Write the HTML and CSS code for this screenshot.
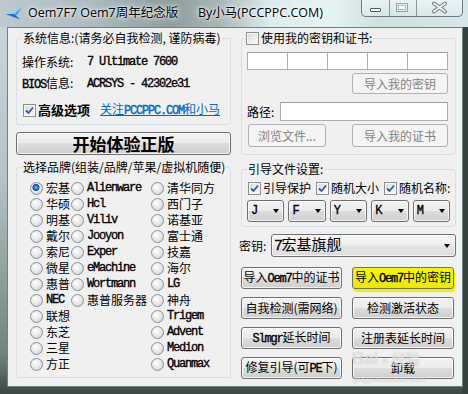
FILE: index.html
```html
<!DOCTYPE html>
<html lang="zh-CN">

<head>
  <meta charset="UTF-8">
  <title>Oem7F7 Oem7周年纪念版</title>
  <link rel="stylesheet" href="styles.css">
</head>

<body>

  <div class="ventana">

    <div class="titulo">
      <svg class="icono" width="17" height="13" viewBox="0 0 17 13">
        <path d="M0.5 7 L16.5 0.5 L9.5 7 Z" fill="#8fd0ff" />
        <path d="M0.5 7 L9.5 7 L15 12.5 L7 9.5 Z" fill="#1f6fd0" />
        <path d="M9.5 7 L16.5 0.5 L12 8 Z" fill="#3c94e8" />
      </svg>
      <span class="titulo-app">Oem7F7 Oem7周年纪念版</span>
      <span class="titulo-autor">By小马(PCCPPC.COM)</span>

      <div class="botones-ventana">
        <span class="bv bv-min">
          <svg width="28" height="16" viewBox="0 0 28 16">
            <rect x="8.5" y="8.5" width="10" height="3" rx="0.5" fill="#fff" stroke="#4d5962" />
          </svg>
        </span>
        <span class="bv bv-max">
          <svg width="26" height="16" viewBox="0 0 26 16">
            <rect x="6.5" y="3.5" width="11" height="8" fill="none" stroke="#9aa6ac" />
            <rect x="8.5" y="5.5" width="7" height="4" fill="#fff" stroke="#b4bec2" />
          </svg>
        </span>
        <span class="bv bv-cerrar">
          <svg width="46" height="16" viewBox="0 0 46 16">
            <path d="M17 3.5 L28 11.5 M28 3.5 L17 11.5" stroke="#6d7a82" stroke-width="4" stroke-linecap="round" />
            <path d="M17 3.5 L28 11.5 M28 3.5 L17 11.5" stroke="#f4f7f8" stroke-width="2" stroke-linecap="round" />
          </svg>
        </span>
      </div>
    </div>

    <div class="cliente">

      <div class="columna">
        <fieldset class="grupo grupo-sistema">
          <legend>系统信息:(请务必自我检测, 谨防病毒)</legend>
          <div class="fila-info"><span>操作系统:</span><span class="en">7 Ultimate 7600</span></div>
          <div class="fila-info"><span><span class="en">BIOS</span>信息:</span><span class="en">ACRSYS - 42302e31</span></div>
          <div class="fila-avanzado">
            <span class="check marcado">
              <svg width="11" height="11" viewBox="0 0 11 11">
                <path d="M2 5.5 L4.5 8 L9 2.5" fill="none" stroke="#3256a8" stroke-width="1.8" />
              </svg>
            </span>
            <b class="avanzado">高级选项</b>
            <a class="enlace" href="#">关注<span class="en">PCCPPC.COM</span>和小马</a>
          </div>
        </fieldset>

        <button class="btn btn-inicio">开始体验正版</button>

        <fieldset class="grupo grupo-marca">
          <legend>选择品牌(组装/品牌/苹果/虚拟机随便)</legend>
          <div class="marcas">
            <label class="opcion"><span class="radio activo"></span>宏基</label>
            <label class="opcion"><span class="radio"></span><span class="en">Alienware</span></label>
            <label class="opcion"><span class="radio"></span>清华同方</label>

            <label class="opcion"><span class="radio"></span>华硕</label>
            <label class="opcion"><span class="radio"></span><span class="en">Hcl</span></label>
            <label class="opcion"><span class="radio"></span>西门子</label>

            <label class="opcion"><span class="radio"></span>明基</label>
            <label class="opcion"><span class="radio"></span><span class="en">Viliv</span></label>
            <label class="opcion"><span class="radio"></span>诺基亚</label>

            <label class="opcion"><span class="radio"></span>戴尔</label>
            <label class="opcion"><span class="radio"></span><span class="en">Jooyon</span></label>
            <label class="opcion"><span class="radio"></span>富士通</label>

            <label class="opcion"><span class="radio"></span>索尼</label>
            <label class="opcion"><span class="radio"></span><span class="en">Exper</span></label>
            <label class="opcion"><span class="radio"></span>技嘉</label>

            <label class="opcion"><span class="radio"></span>微星</label>
            <label class="opcion"><span class="radio"></span><span class="en">eMachine</span></label>
            <label class="opcion"><span class="radio"></span>海尔</label>

            <label class="opcion"><span class="radio"></span>惠普</label>
            <label class="opcion"><span class="radio"></span><span class="en">Wortmann</span></label>
            <label class="opcion"><span class="radio"></span><span class="en">LG</span></label>

            <label class="opcion"><span class="radio"></span><span class="en">NEC</span></label>
            <label class="opcion"><span class="radio"></span>惠普服务器</label>
            <label class="opcion"><span class="radio"></span>神舟</label>

            <label class="opcion"><span class="radio"></span>联想</label>
            <span></span>
            <label class="opcion"><span class="radio"></span><span class="en">Trigem</span></label>

            <label class="opcion"><span class="radio"></span>东芝</label>
            <span></span>
            <label class="opcion"><span class="radio"></span><span class="en">Advent</span></label>

            <label class="opcion"><span class="radio"></span>三星</label>
            <span></span>
            <label class="opcion"><span class="radio"></span><span class="en">Medion</span></label>

            <label class="opcion"><span class="radio"></span>方正</label>
            <span></span>
            <label class="opcion"><span class="radio"></span><span class="en">Quanmax</span></label>
          </div>
        </fieldset>
      </div>

      <div class="columna">
        <fieldset class="grupo grupo-clave">
          <legend class="leyenda-check"><span class="check"></span>使用我的密钥和证书:</legend>
          <div class="claves">
            <span class="campo clave"></span>
            <span class="campo clave"></span>
            <span class="campo clave"></span>
            <span class="campo clave"></span>
            <span class="campo clave"></span>
          </div>
          <div class="fila-derecha">
            <button class="btn btn-gris" disabled>导入我的密钥</button>
          </div>
          <div class="fila-ruta">
            <span class="etiqueta-ruta">路径:</span>
            <span class="campo ruta"></span>
          </div>
          <div class="fila-archivos">
            <button class="btn btn-gris btn-examinar" disabled>浏览文件...</button>
            <button class="btn btn-gris" disabled>导入我的证书</button>
          </div>
        </fieldset>

        <fieldset class="grupo grupo-arranque">
          <legend>引导文件设置:</legend>
          <div class="fila-checks">
            <span class="item-check">
              <span class="check marcado">
                <svg width="11" height="11" viewBox="0 0 11 11">
                  <path d="M2 5.5 L4.5 8 L9 2.5" fill="none" stroke="#3256a8" stroke-width="1.8" />
                </svg>
              </span>引导保护
            </span>
            <span class="item-check">
              <span class="check marcado">
                <svg width="11" height="11" viewBox="0 0 11 11">
                  <path d="M2 5.5 L4.5 8 L9 2.5" fill="none" stroke="#3256a8" stroke-width="1.8" />
                </svg>
              </span>随机大小
            </span>
            <span class="item-check">
              <span class="check marcado">
                <svg width="11" height="11" viewBox="0 0 11 11">
                  <path d="M2 5.5 L4.5 8 L9 2.5" fill="none" stroke="#3256a8" stroke-width="1.8" />
                </svg>
              </span>随机名称:
            </span>
          </div>
          <div class="fila-letras">
            <span class="combo"><span class="en">J</span><span class="flecha"></span></span>
            <span class="combo"><span class="en">F</span><span class="flecha"></span></span>
            <span class="combo"><span class="en">Y</span><span class="flecha"></span></span>
            <span class="combo"><span class="en">K</span><span class="flecha"></span></span>
            <span class="combo"><span class="en">M</span><span class="flecha"></span></span>
          </div>
        </fieldset>

        <div class="fila-clave">
          <span class="etiqueta-clave">密钥:</span>
          <span class="combo combo-clave"><span><span class="en en-grande">7</span>宏基旗舰</span><span class="flecha"></span></span>
        </div>

        <div class="acciones">
          <button class="btn">导入<span class="en">Oem7</span>中的证书</button>
          <button class="btn btn-resaltado">导入<span class="en">Oem7</span>中的密钥</button>
          <button class="btn">自我检测(需网络)</button>
          <button class="btn">检测激活状态</button>
          <button class="btn"><span class="en">Slmgr</span>延长时间</button>
          <button class="btn">注册表延长时间</button>
          <button class="btn">修复引导(可<span class="en">PE</span>下)</button>
          <button class="btn">卸载</button>
        </div>
      </div>

    </div>

    <div class="marca-agua">
      <span class="ma-bai">Bai</span><span class="ma-pata">●</span><span class="ma-jy">经验</span>
      <div class="ma-url">jingyan.baidu.com</div>
    </div>

  </div>

</body>

</html>
```

FILE: styles.css
```css
* {
  box-sizing: border-box;
}

body {
  margin: 0;
  font-family: "Noto Sans CJK SC", sans-serif;
  font-size: 12px;
  line-height: 14px;
  color: #000;
}

.en {
  font-family: "Liberation Mono", monospace;
  font-size: 12px;
  letter-spacing: -1.2px;
  -webkit-text-stroke: 0.35px currentColor;
}

.ventana {
  position: relative;
  width: 468px;
  height: 394px;
  overflow: hidden;
  background:
    linear-gradient(90deg, rgba(0, 0, 0, 0) 462px, #34433f 463px),
    linear-gradient(180deg, #ccd8dc 0, #b5c3c5 45%, #72837d 90%, #3b4945 100%);
}

/* barra de titulo */
.titulo {
  height: 27px;
  display: flex;
  align-items: flex-start;
  padding: 0 5px;
  background: linear-gradient(90deg, #bccad0 0, #aebcc2 90px, #8f9e9c 170px, #a9b8b6 220px, #dcebec 270px, #e6f3f3 330px, #cfe0e0 380px, #d8e8ea 468px);
}

.icono {
  margin-top: 7px;
  flex: none;
}

.titulo-app,
.titulo-autor {
  font-family: "Open Sans", "Noto Sans CJK SC", sans-serif;
  font-size: 12.5px;
  line-height: 25px;
  white-space: nowrap;
  text-shadow: 0 0 6px #fff, 0 0 3px #fff;
}

.titulo-app {
  margin-left: 6px;
  width: 170px;
}

.botones-ventana {
  margin-left: auto;
  display: flex;
  height: 17px;
  border: 1px solid #6a7a82;
  border-top: none;
  border-radius: 0 0 5px 5px;
  background: linear-gradient(rgba(255, 255, 255, 0.55), rgba(225, 238, 242, 0.35));
  overflow: hidden;
}

.bv {
  display: block;
  height: 16px;
}

.bv-min {
  width: 27px;
}

.bv-max {
  width: 27px;
  border-left: 1px solid #8797a0;
}

.bv-cerrar {
  width: 46px;
  border-left: 1px solid #8797a0;
}

.bv svg {
  display: block;
}

/* area cliente */
.cliente {
  margin-left: 7px;
  width: 456px;
  height: 360px;
  border: 1px solid #6f8087;
  background: #f0f0f0;
  display: flex;
  gap: 10px;
  padding: 3px 6px 0 8px;
}

.columna {
  width: 215px;
  display: flex;
  flex-direction: column;
}

.grupo {
  margin: 0;
  padding: 0 5px;
  min-width: 0;
  border: 1px solid #d5dfe5;
  border-radius: 3px;
}

.grupo legend {
  padding: 0 1px;
  height: 14px;
  line-height: 14px;
  white-space: nowrap;
}

.grupo-sistema {
  height: 94px;
}

.fila-info {
  display: grid;
  grid-template-columns: 65px 1fr;
  align-items: center;
  height: 22px;
}

.fila-info:first-of-type {
  margin-top: 6px;
}

.fila-avanzado {
  display: flex;
  align-items: center;
  height: 22px;
  margin-top: 4px;
  padding-left: 1px;
}

.avanzado {
  margin-left: 2px;
  font-size: 13px;
}

.enlace {
  margin-left: 10px;
  color: #0066cc;
}

.btn {
  font-family: inherit;
  font-size: 12px;
  line-height: 14px;
  height: 22px;
  padding: 0;
  color: #000;
  border: 1px solid #707070;
  border-radius: 3px;
  background: linear-gradient(#f2f2f2 0, #ebebeb 49%, #dddddd 50%, #cfcfcf 100%);
  box-shadow: inset 0 0 0 1px rgba(255, 255, 255, 0.75);
  white-space: nowrap;
}

.btn-gris,
.btn:disabled {
  border-color: #adb2b5;
  background: #f4f4f4;
  color: #838383;
  box-shadow: none;
}

.btn-inicio {
  margin-top: 7px;
  height: 23px;
  font-size: 17px;
  font-weight: bold;
  line-height: 20px;
}

.grupo-marca {
  margin-top: 5px;
  height: 218px;
}

.marcas {
  margin: 6px 0 0 8px;
  display: grid;
  grid-template-columns: 41px 80px 1fr;
  grid-auto-rows: 16px;
}

.opcion {
  display: flex;
  align-items: center;
  white-space: nowrap;
}

.radio {
  flex: none;
  width: 13px;
  height: 13px;
  margin-right: 3px;
  border: 1px solid #8c9096;
  border-radius: 50%;
  background: radial-gradient(circle at 40% 35%, #ffffff 0, #eaeaea 45%, #c9cbcd 100%);
}

.radio.activo {
  background:
    radial-gradient(circle at 45% 40%, #8fd0ff 0, #2f7fd6 1.6px, #174a98 3.2px, rgba(0, 0, 0, 0) 3.8px),
    radial-gradient(circle at 40% 35%, #ffffff 0, #eaeaea 45%, #c9cbcd 100%);
}

.check {
  flex: none;
  width: 13px;
  height: 13px;
  border: 1px solid #8e8f8f;
  background: linear-gradient(135deg, #d6d8da 0, #f2f2f2 65%, #ffffff 100%);
  box-shadow: inset 0 0 0 1px #f6f6f6;
}

.check svg {
  display: block;
  margin: 0;
}

/* columna derecha */
.grupo-clave {
  height: 124px;
  padding-right: 7px;
}

.leyenda-check {
  display: flex;
  align-items: center;
  margin-left: -2px;
}

.leyenda-check .check {
  margin-right: 2px;
}

.campo {
  display: block;
  background: #fff;
  border: 1px solid #abadb3;
  border-top-color: #9aa0a8;
}

.claves {
  display: flex;
  margin-top: 7px;
}

.clave {
  width: 41px;
  height: 18px;
}

.clave + .clave {
  margin-left: -1px;
}

.fila-derecha {
  display: flex;
  justify-content: flex-end;
  margin-top: 3px;
}

.fila-derecha .btn {
  width: 96px;
  height: 21px;
}

.fila-ruta {
  display: flex;
  align-items: center;
  margin-top: 8px;
  height: 19px;
}

.etiqueta-ruta {
  width: 33px;
}

.ruta {
  flex: 1;
  height: 19px;
}

.fila-archivos {
  display: flex;
  justify-content: space-between;
  margin-top: 3px;
}

.fila-archivos .btn {
  width: 96px;
  height: 23px;
}

.fila-archivos .btn-examinar {
  width: 78px;
  margin-left: 1px;
}

.grupo-arranque {
  margin-top: 7px;
  height: 65px;
}

.fila-checks {
  display: flex;
  align-items: center;
  height: 16px;
  margin-top: 4px;
  padding-left: 1px;
  gap: 5px;
  white-space: nowrap;
}

.item-check {
  display: flex;
  align-items: center;
}

.item-check .check {
  margin-right: 2px;
}

.fila-letras {
  display: flex;
  gap: 4px;
  margin-top: 4px;
}

.combo {
  display: flex;
  align-items: center;
  justify-content: space-between;
  width: 38px;
  height: 22px;
  padding: 0 4px 0 3px;
  border: 1px solid #707070;
  border-radius: 3px;
  background: linear-gradient(#f2f2f2 0, #ebebeb 49%, #dddddd 50%, #cfcfcf 100%);
  box-shadow: inset 0 0 0 1px rgba(255, 255, 255, 0.75);
}

.flecha {
  width: 0;
  height: 0;
  border-left: 3.5px solid transparent;
  border-right: 3.5px solid transparent;
  border-top: 4px solid #000;
}

.fila-clave {
  display: flex;
  align-items: center;
  margin: 7px 0 0 -2px;
  height: 23px;
}

.etiqueta-clave {
  width: 32px;
}

.combo-clave {
  flex: 1;
  height: 23px;
  padding: 0 5px 0 2px;
  font-size: 15px;
  line-height: 18px;
  background: linear-gradient(#f6f6f6 0, #efefef 49%, #e6e6e6 50%, #dcdcdc 100%);
}

.combo .en-grande {
  font-size: 15px;
  letter-spacing: -1.5px;
}

.acciones {
  display: grid;
  grid-template-columns: 101px 102px;
  grid-auto-rows: 22px;
  column-gap: 10px;
  row-gap: 8px;
  margin-top: 10px;
}

.btn-resaltado {
  background: linear-gradient(#f7f700, #eaea00);
  box-shadow: 1px 3px 0 0 #eeee10;
}

/* marca de agua */
.marca-agua {
  position: absolute;
  left: 352px;
  top: 350px;
  color: rgba(255, 255, 255, 0.6);
  text-shadow: 0 0 1px rgba(110, 110, 110, 0.45);
  font-family: "Liberation Sans", sans-serif;
  line-height: 16px;
  pointer-events: none;
}

.ma-bai {
  font-size: 17px;
  font-weight: bold;
}

.ma-pata {
  font-size: 12px;
  margin: 0 3px;
}

.ma-jy {
  font-family: "Noto Sans CJK SC", sans-serif;
  font-size: 14px;
  font-weight: bold;
}

.ma-url {
  font-size: 9px;
  line-height: 10px;
  margin: 6px 0 0 2px;
}
```
